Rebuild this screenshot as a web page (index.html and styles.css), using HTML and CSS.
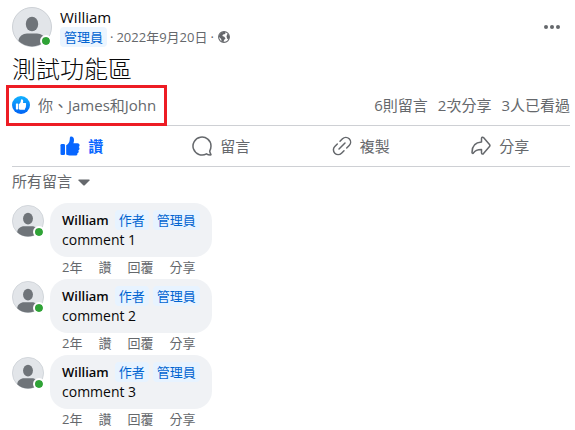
FILE: index.html
```
<!DOCTYPE html>
<html lang="zh-Hant">
<head>
<meta charset="utf-8">
<meta name="viewport" content="width=device-width, initial-scale=1">
<title>測試功能區</title>
<link rel="stylesheet" href="styles.css">
</head>
<body>
<svg class="symbols" aria-hidden="true">
  <symbol id="person" viewBox="0 0 40 40">
    <circle cx="20" cy="20" r="19.500" fill="#e2e5e9" stroke="#ccd0d5"/>
    <ellipse cx="20" cy="17" rx="6.200" ry="7.300" fill="#6f7479"/>
    <path d="M6.500 34C6.500 29.500 11 26.500 15 26.500h10c4 0 8.500 3 8.500 7.500A19.500 19.500 0 0 1 6.500 34z" fill="#6f7479"/>
  </symbol>
  <symbol id="thumb" viewBox="0 0 20 20">
    <rect x="0.500" y="8" width="4.500" height="11" rx="1.300"/>
    <path d="M6.200 9.200c2.200-1.300 3.300-3 3.500-5.500L9.900 1.600C10 .8 10.500.4 11.200.4c1.800 0 2.800 1.500 2.800 3.500 0 1.300-.2 2.200-.6 3.300h4c1.300 0 2.200.8 2.200 2 0 .8-.4 1.300-.9 1.700.5.400.8.900.8 1.600 0 .9-.5 1.500-1.200 1.900.3.400.4.800.4 1.200 0 .9-.6 1.500-1.400 1.800.1.200.1.400.1.600 0 1-.9 1.600-2.200 1.600h-4.400c-2 0-3-.3-4.600-1z"/>
  </symbol>
</svg>
<article class="post">
  <header class="header">
    <span class="avatar"><svg><use href="#person"/></svg></span>
    <div class="byline">
      <a class="author" href="#">William</a>
      <div class="details">
        <span class="badge">管理員</span>
        <span>·</span>
        <a href="#">2022年9月20日</a>
        <span>·</span>
        <svg class="globe" viewBox="0 0 12 12" role="img" aria-label="公開">
          <circle cx="6" cy="6" r="5.400" fill="#fff" stroke="#65676b" stroke-width="1.100"/>
          <path d="M1 4.500L3 1.500 6.500.8 7.800 2 6.500 3.200 5 3.500 4.300 5l2 .8L7.500 7.500 6 9l-.5 2.200L3.500 10.500 3.200 8 1 6zM9.200 3l1.500.8.600 2.400-.8 2.300L9.200 7.800 8.500 5.600z" fill="#65676b"/>
        </svg>
      </div>
    </div>
    <button class="more" aria-label="更多">
      <svg viewBox="0 0 16 4"><circle cx="2" cy="2" r="2"/><circle cx="8" cy="2" r="2"/><circle cx="14" cy="2" r="2"/></svg>
    </button>
  </header>
  <h1 class="title">測試功能區</h1>
  <div class="summary">
    <a class="reactions" href="#">
      <svg class="like-badge" viewBox="0 0 18 18">
        <defs><linearGradient id="blue" x2="0" y2="1"><stop stop-color="#12b2ff"/><stop offset="1" stop-color="#0062f5"/></linearGradient></defs>
        <circle cx="9" cy="9" r="9" fill="url(#blue)"/>
        <use href="#thumb" x="3.500" y="3" width="11" height="11" fill="#fff"/>
      </svg>
      <span>你、James和John</span>
    </a>
    <div class="counts"><a href="#">6則留言</a><a href="#">2次分享</a><a href="#">3人已看過</a></div>
  </div>
  <div class="actions">
    <button class="action liked"><svg viewBox="0 0 20 20"><use href="#thumb"/></svg>讚</button>
    <button class="action"><svg class="outline" viewBox="0 0 20 20"><path d="M19 10a9 9 0 1 0-4.500 7.800c1.100.8 2.400 1.100 4 1.100.5 0 .6-.4.300-.8-.6-.8-.9-1.800-1.100-3C18.500 13.700 19 12 19 10z"/></svg>留言</button>
    <button class="action"><svg class="outline" viewBox="0 0 20 20"><path d="M8 5.300l2.500-2.500a4.700 4.700 0 0 1 6.700 6.700L14.700 12M12 14.700l-2.500 2.500a4.700 4.700 0 0 1-6.700-6.700L5.300 8M7 13l6-6"/></svg>複製</button>
    <button class="action"><svg class="outline" viewBox="0 0 20 20"><path d="M10.500 2.500c0-1.300 1.200-1.700 2-.9l6 7c.6.700.6 1.300 0 2l-6 7c-.8.800-2 .4-2-.9v-3.300c-4 0-6.500.8-8 3.500-.5.900-1.500.6-1.500-.5C1 10 4.500 6.200 10.500 5.900z"/></svg>分享</button>
  </div>
  <button class="filter">所有留言<svg viewBox="0 0 12 7"><path d="M1 .5h10q1 0 .500 1L7 6q-1 1-2 0L.5 1.500Q0 .5 1 .5z"/></svg></button>
  <ul class="comments">
    <li class="comment">
      <span class="avatar small"><svg><use href="#person"/></svg></span>
      <div class="body">
        <div class="bubble">
          <div class="names"><a class="commenter" href="#">William</a><span class="tag">作者</span><span class="tag">管理員</span></div>
          <p class="text">comment 1</p>
        </div>
        <div class="links"><a href="#">2年</a><a href="#">讚</a><a href="#">回覆</a><a href="#">分享</a></div>
      </div>
    </li>
    <li class="comment">
      <span class="avatar small"><svg><use href="#person"/></svg></span>
      <div class="body">
        <div class="bubble">
          <div class="names"><a class="commenter" href="#">William</a><span class="tag">作者</span><span class="tag">管理員</span></div>
          <p class="text">comment 2</p>
        </div>
        <div class="links"><a href="#">2年</a><a href="#">讚</a><a href="#">回覆</a><a href="#">分享</a></div>
      </div>
    </li>
    <li class="comment">
      <span class="avatar small"><svg><use href="#person"/></svg></span>
      <div class="body">
        <div class="bubble">
          <div class="names"><a class="commenter" href="#">William</a><span class="tag">作者</span><span class="tag">管理員</span></div>
          <p class="text">comment 3</p>
        </div>
        <div class="links"><a href="#">2年</a><a href="#">讚</a><a href="#">回覆</a><a href="#">分享</a></div>
      </div>
    </li>
  </ul>
</article>
</body>
</html>
```
FILE: styles.css
```
*, *::after { box-sizing: border-box; }
body {
  margin: 0;
  background: #fff;
  color: #080809;
  font-family: "Open Sans", "Noto Sans CJK TC", sans-serif;
  font-size: 15px;
  line-height: 20px;
}
a { color: inherit; text-decoration: none; }
button {
  padding: 0;
  border: 0;
  background: none;
  color: #65686c;
  font: inherit;
  cursor: pointer;
}
svg { display: block; flex: none; }
.symbols { position: absolute; width: 0; height: 0; }
.post { padding: 7px 5px 0 12px; }

.header { display: flex; gap: 8px; }
.avatar { position: relative; flex: none; width: 40px; height: 40px; }
.avatar svg { width: 100%; height: 100%; }
.avatar::after {
  content: "";
  position: absolute;
  right: 0;
  bottom: 0;
  width: 12px;
  height: 12px;
  border-radius: 50%;
  background: #2fa336;
  border: 2px solid #fff;
  background-clip: padding-box;
}
.byline { flex: 1; }
.author { display: block; font-weight: 500; }
.details {
  display: flex;
  align-items: center;
  gap: 3px;
  color: #65686c;
  font-size: 13px;
}
.badge {
  padding: 0 4px;
  border-radius: 4px;
  background: #ebf5ff;
  color: #0064d1;
}
.globe { width: 12px; height: 12px; margin-left: 1px; }
.more { align-self: center; width: 36px; height: 36px; }
.more svg { width: 16px; height: 4px; margin: auto; fill: #65686c; }

.title { margin: 6px 0 0; font-size: 24px; font-weight: 300; line-height: 32px; }

.summary {
  display: flex;
  align-items: center;
  justify-content: space-between;
  height: 41px;
  border-bottom: 1px solid #ced0d4;
  color: #65686c;
  font-size: 15px;
}
.reactions { position: relative; display: flex; align-items: center; gap: 8px; }
.reactions::after {
  content: "";
  position: absolute;
  inset: -10px -11px -11px -6px;
  border: 3px solid #ed1c24;
}
.like-badge { width: 18px; height: 18px; }
.counts { display: flex; gap: 10px; }

.actions {
  display: grid;
  grid-template-columns: repeat(4, 1fr);
  height: 41px;
  border-bottom: 1px solid #ced0d4;
}
.action { display: flex; align-items: center; justify-content: center; gap: 8px; }
.action svg { width: 20px; height: 20px; fill: currentColor; }
.action .outline {
  fill: none;
  stroke: currentColor;
  stroke-width: 1.5px;
  stroke-linecap: round;
  stroke-linejoin: round;
}
.liked { color: #0866ff; font-weight: 600; }

.filter { display: flex; align-items: center; gap: 6px; margin-top: 4px; }
.filter svg { width: 12px; height: 7px; margin-top: 2px; fill: #65686c; }

.comments { margin: 12px 0 0; padding: 0; list-style: none; }
.comment { display: flex; gap: 6px; }
.small { width: 32px; height: 32px; margin-top: 2px; }
.small::after { right: -1px; bottom: -1px; }
.bubble {
  width: fit-content;
  padding: 7px 12px;
  border-radius: 18px;
  background: #f0f2f5;
}
.names { display: flex; gap: 4px; font-size: 13px; }
.commenter { margin-right: 2px; font-weight: 600; }
.tag {
  padding: 0 4px;
  border-radius: 4px;
  background: #e7f3ff;
  color: #0064d1;
}
.text { margin: 0; font-size: 14px; }
.links {
  display: flex;
  gap: 16px;
  padding: 0 12px 2px;
  color: #65686c;
  font-size: 13px;
}
```
